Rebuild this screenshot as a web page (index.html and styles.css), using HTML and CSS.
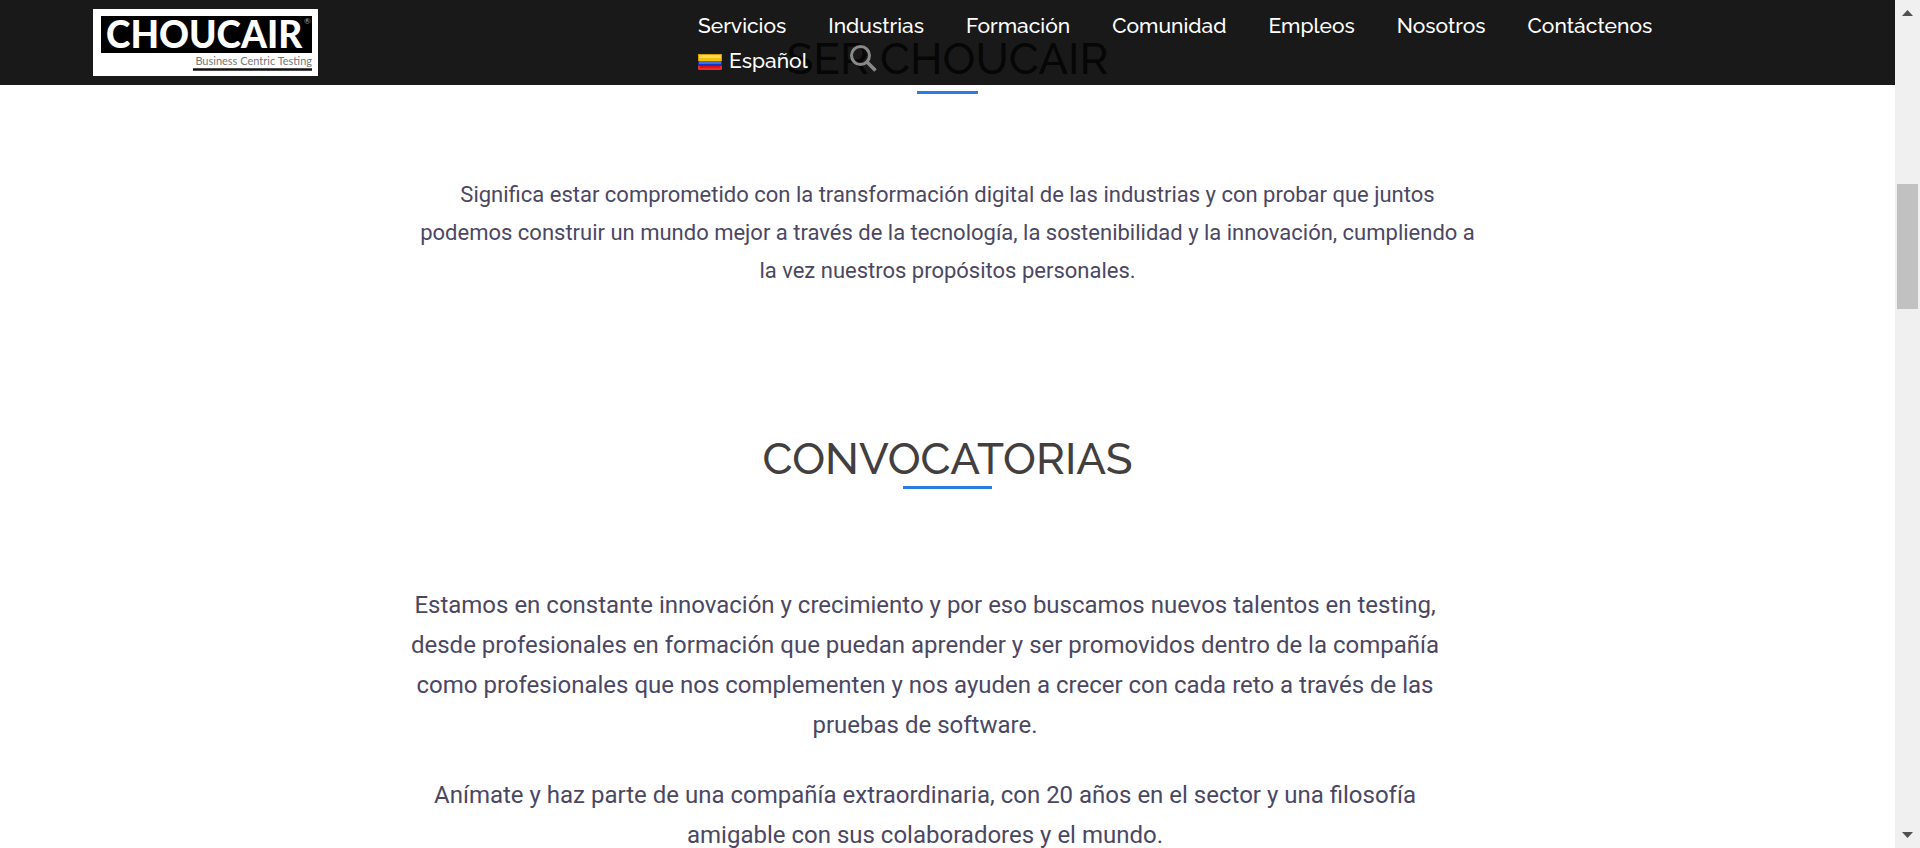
FILE: index.html
```html
<!DOCTYPE html>
<html lang="es">
<head>
<meta charset="utf-8">
<title>Ser Choucair</title>
<link rel="stylesheet" href="styles.css">
</head>
<body>
<div class="window">
  <div class="page">
    <header class="site-header">
      <a class="logo" href="#" aria-label="Choucair, Business Centric Testing">
        <svg width="225" height="67" viewBox="0 0 225 67">
          <rect width="225" height="67" fill="#fff"/>
          <rect x="8" y="7" width="211" height="37" fill="#000"/>
          <text class="logo-name" x="13" y="39">CHOUCAIR</text>
          <text class="logo-mark" x="211" y="15">®</text>
          <text class="logo-tagline" x="219" y="56" text-anchor="end">Business Centric Testing</text>
          <path d="M100 60.500H219" stroke="#111" stroke-width="2.500"/>
        </svg>
      </a>
      <nav class="menu">
        <a href="#">Servicios</a>
        <a href="#">Industrias</a>
        <a href="#">Formación</a>
        <a href="#">Comunidad</a>
        <a href="#">Empleos</a>
        <a href="#">Nosotros</a>
        <a href="#">Contáctenos</a>
        <a class="language" href="#">
          <svg width="24" height="16" viewBox="0 0 24 16">
            <rect width="24" height="8" fill="#f4be0c"/>
            <rect x="1" y="1" width="22" height="3" fill="#fbd95a"/>
            <rect y="7" width="24" height="5" fill="#1233c4"/>
            <rect x="1" y="7" width="22" height="3" fill="#3e70dc"/>
            <rect y="12" width="24" height="4" fill="#e0100c"/>
            <path d="M1 12V15H23V12" fill="none" stroke="#f0474a"/>
            <path d="M.5 0V7M23.500 0V7M0 .5H24" fill="none" stroke="#dc9c00"/>
          </svg>
          Español
        </a>
        <button class="search" type="button" aria-label="Buscar">
          <svg width="27" height="27" viewBox="0 0 27 27" fill="none" stroke="#898989">
            <circle cx="10.500" cy="10.500" r="9" stroke-width="3"/>
            <path d="M17 17L25.500 25.500" stroke-width="3.500"/>
          </svg>
        </button>
      </nav>
    </header>
    <main class="content">
      <section class="about">
        <h2 class="title">SER CHOUCAIR</h2>
        <p>Significa estar comprometido con la transformación digital de las industrias y con probar que juntos podemos construir un mundo mejor a través de la tecnología, la sostenibilidad y la innovación, cumpliendo a la vez nuestros propósitos personales.</p>
      </section>
      <section class="calls">
        <h2 class="title title-wide">CONVOCATORIAS</h2>
        <div class="calls-text">
          <p>Estamos en constante innovación y crecimiento y por eso buscamos nuevos talentos en testing, desde profesionales en formación que puedan aprender y ser promovidos dentro de la compañía como profesionales que nos complementen y nos ayuden a crecer con cada reto a través de las pruebas de software.</p>
          <p>Anímate y haz parte de una compañía extraordinaria, con 20 años en el sector y una filosofía amigable con sus colaboradores y el mundo.</p>
        </div>
      </section>
    </main>
  </div>
  <div class="scrollbar" aria-hidden="true">
    <svg width="11" height="6" viewBox="0 0 11 6"><path d="M0 6L5.500 0L11 6Z" fill="#505050"/></svg>
    <div class="track"><div class="thumb"></div></div>
    <svg width="11" height="6" viewBox="0 0 11 6"><path d="M0 0H11L5.500 6Z" fill="#505050"/></svg>
  </div>
</div>
</body>
</html>
```

FILE: styles.css
```css
* { box-sizing: border-box; }

body {
  margin: 0;
  background: #fff;
  color: #4b4763;
  font-family: Roboto, "Liberation Sans", sans-serif;
}

.window {
  display: flex;
  height: 100vh;
  overflow: hidden;
}

.page {
  position: relative;
  flex: 1;
  min-width: 0;
}

/* Header floats over the scrolled content */
.site-header {
  position: absolute;
  top: 0;
  left: 0;
  right: 0;
  z-index: 2;
  display: flex;
  justify-content: space-between;
  padding: 0 200px 0 93px;
  background: rgba(0, 0, 0, 0.9);
}

.logo { padding: 9px 0; }

.logo svg, .language svg, .search svg, .scrollbar svg { display: block; }

.logo-name {
  fill: #fff;
  font: 900 37px Lato, sans-serif;
}

.logo-mark {
  fill: #aaa;
  font: 8px Lato, sans-serif;
}

.logo-tagline {
  fill: #777;
  font: 11px Lato, sans-serif;
}

.menu {
  display: flex;
  flex-wrap: wrap;
  align-content: flex-start;
  column-gap: 42px;
  width: 997px;
  padding-top: 8px;
}

.menu a {
  color: #fff;
  font: 500 21px/35px Raleway, Lato, sans-serif;
  text-decoration: none;
}

.menu .language {
  display: flex;
  align-items: center;
  gap: 7px;
}

.language svg { margin-top: 3px; }

.search {
  padding: 0 0 4px;
  border: 0;
  background: none;
}

.content {
  display: flex;
  flex-direction: column;
  align-items: center;
  padding-top: 32px;
}

.about, .calls {
  width: 1095px;
  max-width: 100%;
  text-align: center;
}

.title {
  display: flex;
  flex-direction: column;
  align-items: center;
  gap: 6px;
  margin: 0;
  color: #433f3e;
  font: 500 44px/53px Raleway, Lato, sans-serif;
}

.title::after {
  width: 61px;
  height: 3px;
  background: #2a7de1;
  content: "";
}

.title-wide { gap: 1px; }

.title-wide::after { width: 89px; }

.about p {
  margin: 0;
  padding: 82px 16px 0;
  font-size: 22px;
  line-height: 38px;
}

.calls { padding-top: 142px; }

.calls-text {
  padding: 96px 45px 0 0;
  font-size: 24px;
  line-height: 40px;
}

.calls-text p { margin: 0 0 30px; }

.scrollbar {
  display: flex;
  flex-direction: column;
  align-items: center;
  width: 25px;
  padding: 10px 2px;
  background: #f0f0f0;
}

.track {
  flex: 1;
  align-self: stretch;
  padding-top: 168px;
}

.thumb {
  height: 125px;
  background: #c1c1c1;
}
```
